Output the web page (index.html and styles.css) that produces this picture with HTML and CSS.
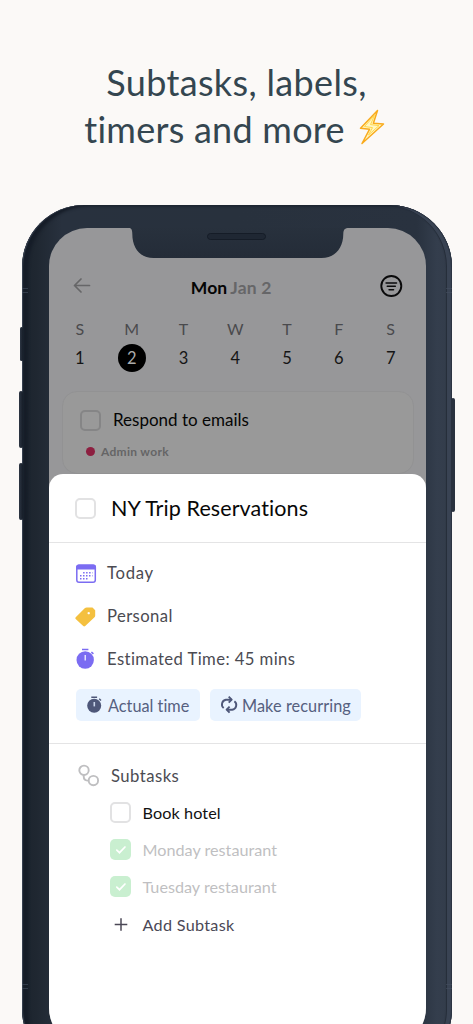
FILE: index.html
```html
<!DOCTYPE html>
<html lang="en">
<head>
<meta charset="utf-8">
<meta name="viewport" content="width=device-width">
<title>Subtasks, labels, timers and more</title>
<link rel="stylesheet" href="styles.css">
</head>
<body>
<main class="page">
  <h1 class="headline">
    <span class="headline-row"><span class="t hl1">Subtasks, labels,</span></span>
    <span class="headline-row"><span class="t hl2">timers and more</span>
      <svg class="bolt" width="26" height="36" viewBox="0 0 26 36"><path d="M18.5 1.500 1.500 19.200 10.500 20.300 3 34.500 24.500 15 14.400 14.200Z" fill="#fff6c4" stroke="#f9ab1d" stroke-width="1.500" stroke-linejoin="round"/><path d="M15.500 6.500 5.500 17.500 13.500 18.600 9.500 26 20 16.600 11.500 15.600Z" fill="none" stroke="#ffd84a" stroke-width="1"/></svg>
    </span>
  </h1>

  <div class="phone">
    <i class="side mute"></i><i class="side vol-up"></i><i class="side vol-down"></i><i class="side power"></i>
    <i class="seam seam-tl"></i><i class="seam seam-tr"></i><i class="seam seam-bl"></i><i class="seam seam-br"></i>
    <div class="screen">
      <svg class="notch" width="220" height="32" viewBox="0 0 220 32">
        <defs><linearGradient id="ng" x1="0" y1="0" x2="0" y2="1"><stop offset="0" stop-color="#28313d"/><stop offset="1" stop-color="#242c38"/></linearGradient></defs>
        <path d="M0 0H220V1C216 1 214.300 2.500 214.300 7C214.300 21 206 31 192.500 31H24.500C11 31 3.300 21 3.300 7C3.300 2.500 2 1 0 1Z" fill="url(#ng)"/>
        <rect x="78.500" y="6.500" width="58" height="6" rx="3" fill="#1f2733" stroke="#151c27"/>
      </svg>
      <header class="bar">
        <svg width="18" height="16" viewBox="0 0 18 16" fill="none" stroke="#666668" stroke-width="1.700" stroke-linecap="round" stroke-linejoin="round"><path d="M16.500 7.500H1.500M8 1 1.500 7.500 8 14"/></svg>
        <div class="date"><b class="t mon">Mon</b><b class="t jan">Jan 2</b></div>
        <svg width="24" height="24" viewBox="0 0 24 24" fill="none" stroke="#0a0a0b" stroke-width="1.900" stroke-linecap="round"><circle cx="12.300" cy="12" r="10"/><path d="M7.100 9H17.500M8.300 12.300H16.300M10.100 15.700H14.500" stroke-width="1.600"/></svg>
      </header>
      <div class="week names"><span>S</span><span>M</span><span>T</span><span>W</span><span>T</span><span>F</span><span>S</span></div>
      <div class="week days"><span>1</span><span class="on">2</span><span>3</span><span>4</span><span>5</span><span>6</span><span>7</span></div>
      <article class="card">
        <div class="card-top"><i class="box dim"></i><span class="t respond">Respond to emails</span></div>
        <div class="card-tag"><i class="dot"></i><span class="t admin">Admin work</span></div>
      </article>

      <section class="sheet">
        <div class="title"><i class="box"></i><h2 class="t ny">NY Trip Reservations</h2></div>
        <div class="details">
          <div class="detail">
            <svg width="22" height="22" viewBox="0 0 22 22"><rect x="1.800" y="2.300" width="18.500" height="17" rx="2.300" fill="#fff" stroke="#7b6cf2" stroke-width="1.500"/><path d="M1.050 6.500V4A2.500 2.500 0 0 1 3.550 1.500H18.550A2.500 2.500 0 0 1 21.050 4V6.500Z" fill="#7b6cf2"/><path d="M8.100 9.700H17.500M5 12.700H17.500M5 15.700H14" stroke="#7b6cf2" stroke-width="1.500" stroke-dasharray="1.500 1.500"/></svg>
            <span class="t today">Today</span></div>
          <div class="detail">
            <svg width="22" height="22" viewBox="0 0 22 22"><path fill-rule="evenodd" d="M11.700 1.500H17.500L20.200 4.200V9.500Q20.200 10.500 19.500 11.200L10.200 20Q9.200 20.800 8.200 20L.7 13.100Q-.2 12.200 .7 11.200L9.700 2.300Q10.500 1.500 11.700 1.500ZM13.700 5.900a1.200 1.200 0 1 0 .01 0Z" fill="#f4c03f"/></svg>
            <span class="t personal">Personal</span></div>
          <div class="detail">
            <svg width="22" height="22" viewBox="0 0 22 22"><circle cx="10.200" cy="11" r="8.700" fill="#7b6cf2"/><path d="M7 .5H13.400M16.400 3 18.400 4.900" stroke="#7b6cf2" stroke-width="1.500"/><path d="M10.200 6V11.500" stroke="#fff" stroke-width="1.200"/></svg>
            <span class="t est">Estimated Time: 45 mins</span></div>
          <div class="chips">
            <span class="chip actual">
              <svg width="18" height="18" viewBox="0 0 18 18"><circle cx="8.200" cy="9.700" r="7" fill="#4e5779"/><path d="M5.300 1.200H11.100M13.200 2.800 15 4.600" stroke="#4e5779" stroke-width="1.400"/><path d="M8.300 6V10.400" stroke="#c9d4ea" stroke-width="1.600"/></svg>
              <span class="t act">Actual time</span></span>
            <span class="chip recurring">
              <svg width="18" height="18" viewBox="0 0 18 18" fill="none" stroke="#4e5779" stroke-width="1.900" stroke-linejoin="round"><path d="M3.700 12A4.700 4.700 0 0 1 5.900 3.700H11.300M14.400 5.300A4.700 4.700 0 0 1 12.200 13.700H7"/><path d="M8.700 .7 11.700 3.700 8.700 6.700M9.600 10.700 6.600 13.700 9.600 16.700"/></svg>
              <span class="t make">Make recurring</span></span>
          </div>
        </div>
        <div class="subtasks">
          <div class="sub-head">
            <svg width="24" height="24" viewBox="0 0 24 24" fill="none" stroke="#bfbfc1" stroke-width="1.900"><circle cx="8" cy="6.300" r="4.700"/><circle cx="17.400" cy="16.600" r="4.700"/><path d="M7.700 11V12.500Q7.800 16.400 11.500 16.600H12.700"/></svg>
            <span class="t subs">Subtasks</span></div>
          <div class="sub"><i class="box"></i><span class="t book">Book hotel</span></div>
          <div class="sub done"><i class="box"><svg width="12" height="10" viewBox="0 0 12 10"><path d="M1.800 5.200 4.500 7.700 10 2" fill="none" stroke="#fff" stroke-width="1.700" stroke-linecap="round"/></svg></i><span class="t rest">Monday restaurant</span></div>
          <div class="sub done"><i class="box"><svg width="12" height="10" viewBox="0 0 12 10"><path d="M1.800 5.200 4.500 7.700 10 2" fill="none" stroke="#fff" stroke-width="1.700" stroke-linecap="round"/></svg></i><span class="t rest">Tuesday restaurant</span></div>
          <div class="sub add"><svg width="21" height="21" viewBox="0 0 21 21"><path d="M11 4.200V16.800M4.700 10.500H17.300" stroke="#4b4856" stroke-width="1.500"/></svg><span class="t addsub">Add Subtask</span></div>
        </div>
      </section>
    </div>
  </div>
</main>
</body>
</html>
```
FILE: styles.css
```css
* { box-sizing: border-box; }
body { margin: 0; background: #fbf9f7; font-family: Lato, "Open Sans", sans-serif; font-variant-ligatures: none; }
svg { display: block; flex: none; overflow: visible; }
h1, h2 { margin: 0; font-weight: 400; }
.t { white-space: nowrap; }
.page { height: 1024px; overflow: hidden; display: flow-root; }

.headline { margin-top: 58px; height: 147px; font-size: 36px; color: #344650; }
.headline-row { display: flex; justify-content: center; align-items: center; height: 47px; gap: 14px; }
.hl1 { letter-spacing: .35px; }
.hl2 { letter-spacing: .25px; margin-left: -4px; }
.bolt { margin-top: -4px; }

.phone {
  position: relative; width: 429.500px; height: 866px; margin-left: 22px; padding: 23px 26px 0 27px; border-radius: 62px;
  background: linear-gradient(90deg, #1b232d 0, #1f2731 14px, #28313e 40px, #28313d 50%, #29323f 395px, #343e4d 415px, #333c4a 100%);
  box-shadow: inset 1px 0 1px #3b4554, inset 6px 1px 3px #161d28, inset -1px 0 0 #2b3442, inset -5px 0 0 #394353, inset -6px 0 1px #252d39;
}
.screen { position: relative; height: 818px; border-radius: 38px; background: #979799; overflow: hidden; display: flex; flex-direction: column; }
.notch { position: absolute; left: 80px; top: -1px; }

.side { position: absolute; background: linear-gradient(90deg, #2d3643, #161d28); border-radius: 2px; width: 4px; left: -3.500px; }
.mute { top: 122px; height: 34px; left: -2px; width: 3px; }
.vol-up { top: 186px; height: 57px; }
.vol-down { top: 258px; height: 57px; }
.power { left: 429px; top: 193px; height: 114px; background: #29323f; }
.seam { position: absolute; width: 6px; height: 5px; border: solid #465061; border-width: 1px 0; opacity: .6; }
.seam-tl { left: 0; top: 83px; }
.seam-tr { right: 0; top: 83px; }
.seam-bl { left: 0; top: 779px; }
.seam-br { right: 0; top: 779px; }

.bar { display: flex; justify-content: space-between; align-items: center; margin: 45px 22px 0 24px; height: 26px; }
.date { display: flex; gap: 3px; font-size: 17.500px; padding-top: 3px; margin-right: 8px; }
.mon { color: #050505; letter-spacing: .1px; }
.jan { color: #666668; letter-spacing: .2px; }
.week { display: grid; grid-template-columns: repeat(7, 51.800px); margin-left: 5px; justify-items: center; align-items: center; }
.names { margin-top: 19px; height: 20px; font-size: 16px; color: #4a4a4d; }
.days { margin-top: 6px; height: 28px; font-size: 16.500px; line-height: 28px; color: #151515; }
.days span { height: 28px; }
.on { width: 28px; text-align: center; border-radius: 50%; background: #000; color: #aaa; }

.card { flex: none; margin: 19px 12px 0 13px; height: 83px; border: 1.500px solid #929293; border-radius: 15px; background: #999; padding: 17px 17px 0; }
.card-top { display: flex; align-items: center; gap: 12px; height: 22px; font-size: 17px; color: #050505; }
.respond { margin-top: -2px; }
.card-tag { display: flex; align-items: center; gap: 6px; height: 16px; margin: 12.500px 0 0 6px; font-size: 12px; font-weight: 700; color: #656566; }
.admin { letter-spacing: .3px; }
.dot { width: 9px; height: 9px; border-radius: 50%; background: #8d1f40; }
.box { flex: none; width: 21px; height: 21px; border: 2px solid #e2e2e3; border-radius: 5px; }
.dim { border-color: #858586; }

.sheet { position: relative; flex: 1; border-radius: 14px 14px 0 0; background: #fff; color: #4b4b52; }
.title { display: flex; align-items: center; gap: 15px; height: 69px; padding-left: 26px; border-bottom: 1.500px solid #e4e4e5; }
.ny { font-size: 21.500px; letter-spacing: .1px; color: #070707; }
.details { height: 201px; padding: 9px 0 0 26px; border-bottom: 1.500px solid #e4e4e5; font-size: 16.700px; letter-spacing: .4px; }
.detail { display: flex; align-items: center; gap: 10px; height: 43px; }
.detail .t { margin-top: -1px; }
.today { letter-spacing: .7px; }
.chips { display: flex; gap: 10.500px; margin: 8px 0 0 1px; font-size: 16.300px; letter-spacing: 0; }
.chip { display: flex; align-items: center; gap: 4px; height: 32px; padding-left: 10px; border-radius: 5px; background: #e9f3ff; color: #566080; }
.actual { width: 123.500px; }
.recurring { width: 151px; }
.recurring .t { letter-spacing: .07px; }

.subtasks { padding-top: 20px; font-size: 16.200px; }
.sub-head { display: flex; align-items: center; gap: 11px; height: 24px; padding-left: 27px; margin-bottom: 6px; font-size: 16.700px; letter-spacing: .45px; }
.sub { display: flex; align-items: center; gap: 11.500px; height: 37px; padding-left: 61px; }
.book { color: #111; letter-spacing: .1px; }
.done { color: #bfbfc2; }
.done .box { display: grid; place-items: center; border: 0; background: #c9efd0; }
.add { height: 39px; color: #4b4856; letter-spacing: .3px; }
```
